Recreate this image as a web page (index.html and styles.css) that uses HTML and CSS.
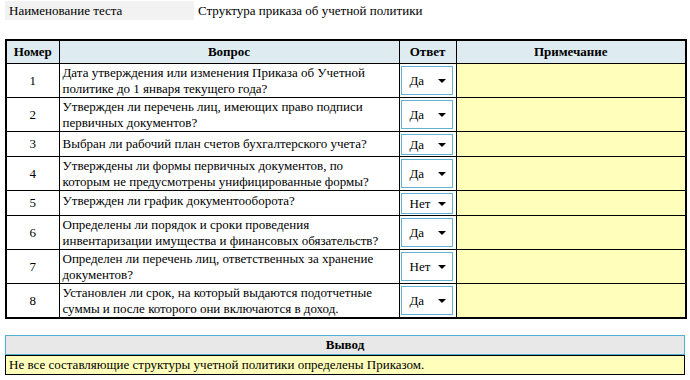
FILE: index.html
```html
<!DOCTYPE html>
<html>
<head>
<meta charset="utf-8">
<link rel="stylesheet" href="styles.css">
</head>
<body class="page">
<div class="title-row">
  <p class="title-label">Наименование теста</p>
  <p class="title-value">Структура приказа об учетной политики</p>
</div>
<table class="grid">
  <colgroup>
    <col class="c-num"><col class="c-q"><col class="c-a"><col class="c-n">
  </colgroup>
  <thead>
    <tr><th class="h">Номер</th><th class="h">Вопрос</th><th class="h">Ответ</th><th class="h">Примечание</th></tr>
  </thead>
  <tbody>
    <tr class="two"><td class="num">1</td><td class="q">Дата утверждения или изменения Приказа об Учетной политике до 1 января текущего года?</td><td class="ans"><div class="sel"><span class="opt">Да</span><i class="arr"></i></div></td><td class="note"></td></tr>
    <tr class="two"><td class="num">2</td><td class="q">Утвержден ли перечень лиц, имеющих право подписи первичных документов?</td><td class="ans"><div class="sel"><span class="opt">Да</span><i class="arr"></i></div></td><td class="note"></td></tr>
    <tr class="one"><td class="num">3</td><td class="q">Выбран ли рабочий план счетов бухгалтерского учета?</td><td class="ans"><div class="sel"><span class="opt">Да</span><i class="arr"></i></div></td><td class="note"></td></tr>
    <tr class="two"><td class="num">4</td><td class="q">Утверждены ли формы первичных документов, по которым не предусмотрены унифицированные формы?</td><td class="ans"><div class="sel"><span class="opt">Да</span><i class="arr"></i></div></td><td class="note"></td></tr>
    <tr class="one"><td class="num">5</td><td class="q top">Утвержден ли график документооборота?</td><td class="ans"><div class="sel"><span class="opt">Нет</span><i class="arr"></i></div></td><td class="note"></td></tr>
    <tr class="two"><td class="num">6</td><td class="q">Определены ли порядок и сроки проведения инвентаризации имущества и финансовых обязательств?</td><td class="ans"><div class="sel"><span class="opt">Да</span><i class="arr"></i></div></td><td class="note"></td></tr>
    <tr class="two"><td class="num">7</td><td class="q">Определен ли перечень лиц, ответственных за хранение документов?</td><td class="ans"><div class="sel"><span class="opt">Нет</span><i class="arr"></i></div></td><td class="note"></td></tr>
    <tr class="two"><td class="num">8</td><td class="q">Установлен ли срок, на который выдаются подотчетные суммы и после которого они включаются в доход.</td><td class="ans"><div class="sel"><span class="opt">Да</span><i class="arr"></i></div></td><td class="note"></td></tr>
  </tbody>
</table>
<div class="summary">
  <p class="summary-head">Вывод</p>
  <p class="summary-body">Не все составляющие структуры учетной политики определены Приказом.</p>
</div>
</body>
</html>
```
FILE: styles.css
```css
.page {
  margin: 0;
  padding: 1px 5px 0 5px;
  background: #ffffff;
  font-family: "Liberation Serif", serif;
  font-size: 13px;
  color: #000;
}
.title-label, .title-value, .h, .num, .q, .opt, .summary-head, .summary-body {
  font-family: "Liberation Serif", serif;
  font-size: 13px;
}
.title-row {
  display: flex;
  align-items: center;
  gap: 4px;
  height: 19px;
}
.title-label {
  margin: 0;
  width: 185px;
  height: 19px;
  line-height: 19px;
  padding-left: 4px;
  background: #f2f2f2;
}
.title-value {
  margin: 0;
  line-height: 19px;
}
.grid {
  margin-top: 19px;
  width: 680px;
  border-collapse: collapse;
  border: 2px solid #000;
  table-layout: fixed;
}
.c-num { width: 53px; }
.c-q { width: 340px; }
.c-a { width: 57px; }
.c-n { width: 230px; }
.h, .num, .q, .ans, .note {
  border: 1px solid #000;
  padding: 0 3px;
  vertical-align: middle;
  line-height: 16px;
}
.q {
  padding-right: 8px;
}
.h {
  background: #deecf2;
  font-weight: bold;
  height: 22px;
  text-align: center;
  padding: 0;
}
.num {
  text-align: center;
}
.q.top {
  vertical-align: top;
  padding-top: 2px;
}
.ans {
  padding: 2px 3px 2px 1px;
}
.one .ans {
  padding-bottom: 1px;
}
.note {
  background: #ffffbb;
}
.sel {
  box-sizing: border-box;
  width: 52px;
  border: 1px solid #63b2cf;
  background: #fff;
  display: flex;
  align-items: center;
  justify-content: space-between;
  padding: 0 6px 0 8px;
}
.two .sel { height: 29px; }
.one .sel { height: 21px; }
.arr {
  width: 0;
  height: 0;
  border-left: 4px solid transparent;
  border-right: 4px solid transparent;
  border-top: 4px solid #000;
}
.summary {
  margin-top: 16px;
  width: 680px;
}
.summary-head {
  margin: 0;
  box-sizing: border-box;
  height: 20px;
  line-height: 18px;
  border: 1px solid #4fb0d2;
  background: #e8e8e8;
  text-align: center;
  font-weight: bold;
}
.summary-body {
  margin: 0;
  box-sizing: border-box;
  height: 20px;
  line-height: 18px;
  border: 1px solid #000;
  background: #ffffbb;
  padding-left: 3px;
}
```
